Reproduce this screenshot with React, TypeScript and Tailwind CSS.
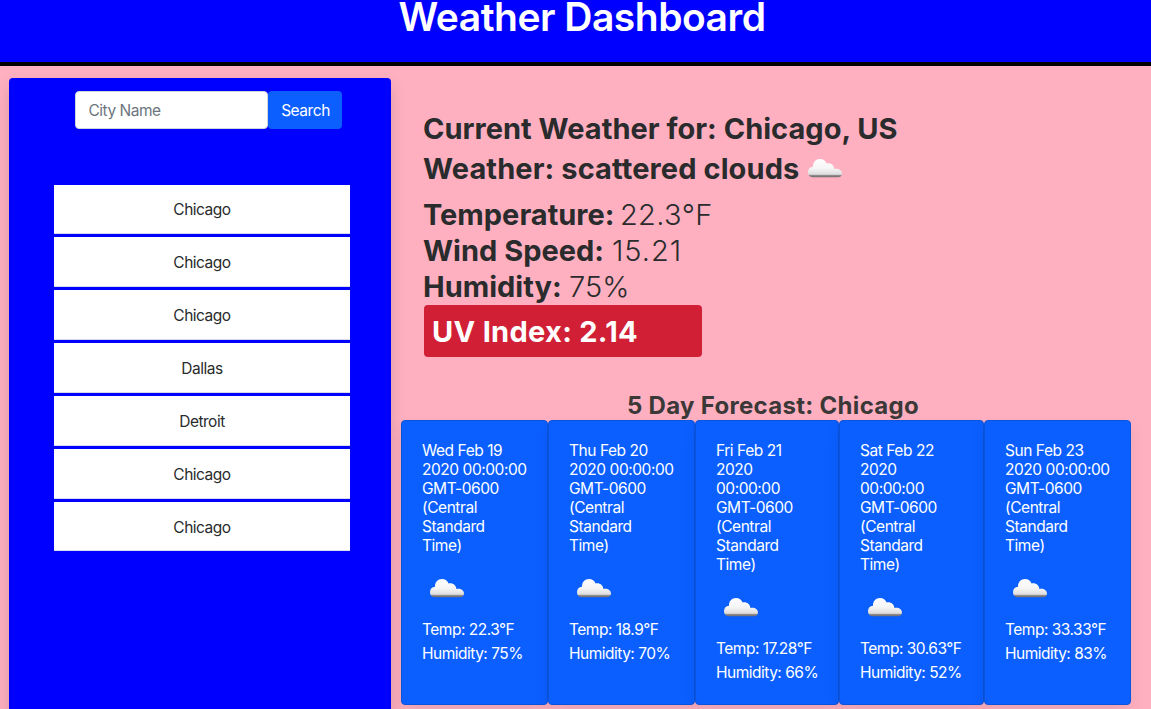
import { useId } from "react";

const cities = ["Chicago", "Chicago", "Chicago", "Dallas", "Detroit", "Chicago", "Chicago"];

const zone = ["GMT-0600", "(Central", "Standard", "Time)"];

const days = [
  { width: "w-[147px]", date: ["Wed Feb 19", "2020 00:00:00", ...zone], icon: "ml-[7px]", temp: "22.3", humidity: "75" },
  { width: "w-[147px]", date: ["Thu Feb 20", "2020 00:00:00", ...zone], icon: "ml-[7px]", temp: "18.9", humidity: "70" },
  { width: "w-[144px]", date: ["Fri Feb 21", "2020", "00:00:00", ...zone], icon: "ml-[7px]", temp: "17.28", humidity: "66" },
  { width: "w-[145px]", date: ["Sat Feb 22", "2020", "00:00:00", ...zone], icon: "ml-[7px]", temp: "30.63", humidity: "52" },
  { width: "w-[147px]", date: ["Sun Feb 23", "2020 00:00:00", ...zone], icon: "ml-[7px]", temp: "33.33", humidity: "83" },
];

function Cloud({ className }: { className: string }) {
  const id = useId();
  return (
    <svg width="36" height="20" viewBox="0 0 36 20" className={className}>
      <defs>
        <linearGradient id={id} x1="0" y1="0" x2="0" y2="1">
          <stop offset="0" stopColor="#fdfdfd" />
          <stop offset="0.5" stopColor="#f6f6f6" />
          <stop offset="0.84" stopColor="#dedee0" />
          <stop offset="0.91" stopColor="#8b8789" />
          <stop offset="1" stopColor="#6f6a6c" />
        </linearGradient>
      </defs>
      <path
        d="M5.5 19.2C2.6 19.2 1 17.2 1 14C1 11 3 9 6 8.8C5.8 4.3 8.8 1 13 1C16.2 1 18.7 2.8 19.6 5.6C23.2 4.6 26.9 6.8 27.4 10.9C31 9.9 35 11.9 35 15.4C35 17.7 33.5 19.2 31 19.2Z"
        fill={`url(#${id})`}
      />
    </svg>
  );
}

export default function App() {
  return (
    <div className="flex h-[709px] w-[1151px] flex-col overflow-hidden bg-[#ffb0c0] font-['Inter',sans-serif] text-[15.5px] text-[#292b2c]">
      <header className="flex h-[66px] shrink-0 justify-center border-b-4 border-black bg-[#0000ff] pl-[13px]">
        <h1 className="h-[34px] whitespace-nowrap text-[39px] leading-[34px] font-[560] tracking-[-0.5px] text-white">Weather Dashboard</h1>
      </header>
      <div className="flex min-h-0 flex-1">
        <aside className="mt-3 ml-[9px] flex h-[660px] w-[382px] shrink-0 flex-col rounded-[4px] bg-[#0000ff] pt-[13px] shadow-[0_8px_16px_rgba(0,0,0,0.15)]">
          <form className="ml-[66px] flex h-[38px]" onSubmit={(e) => e.preventDefault()}>
            <input
              placeholder="City Name"
              aria-label="City Name"
              className="h-[38px] w-[193px] rounded-[4px] border border-[#ced4da] bg-white px-[12.5px] pt-px tracking-[-0.5px] outline-none placeholder:text-[#6c757d]"
            />
            <button className="h-[38px] w-[74px] rounded-[4px] bg-[#0b5fff] pt-[2px] pl-px tracking-[-0.45px] text-white">Search</button>
          </form>
          <ul className="mt-14 ml-[45px] flex w-[296px] flex-col gap-[3px]">
            {cities.map((city, i) => (
              <li key={i} className="flex h-[50px] items-center justify-center border-b border-[#d8d8ee] bg-white pt-[2px] tracking-[-0.5px] first:h-[49px] last:h-[49px] last:pt-[3px]">
                {city}
              </li>
            ))}
          </ul>
        </aside>
        <main className="ml-[10px] flex w-[730px] flex-col">
          <section className="ml-[22px] flex h-[291px] flex-col pt-[43px] text-[29px] whitespace-nowrap">
            <h2 className="h-10 leading-10 font-bold tracking-[0.02px]">Current Weather for: Chicago, US</h2>
            <h2 className="flex h-10 leading-10 font-bold tracking-[0.1px]">
              <span>Weather: scattered clouds</span>
              <Cloud className="mt-[9px] ml-2" />
            </h2>
            <div className="mt-2 leading-9 font-light tracking-[0.4px]">
              <p><strong className="font-bold tracking-normal">Temperature:</strong><span className="ml-[5.5px]">22.3°F</span></p>
              <p><strong className="font-bold tracking-normal">Wind Speed:</strong><span className="ml-[8px] tracking-[1px]">15.21</span></p>
              <p><strong className="font-bold tracking-normal">Humidity:</strong><span className="ml-[7.5px] tracking-[0px]">75%</span></p>
            </div>
            <div className="ml-px h-[52px] w-[278px] rounded-[4px] bg-[#d11f36] pl-2 leading-[53px] font-bold tracking-[0.3px] text-white">
              UV Index: 2.14
            </div>
          </section>
          <h3 className="mt-[34px] h-[29px] pl-[14px] text-center text-[24px] leading-[29px] font-bold tracking-[0.3px] text-[#3b3838]">
            5 Day Forecast: Chicago
          </h3>
          <section className="flex h-[285px]">
            {days.map((day) => (
              <article
                key={day.date[0]}
                className={`${day.width} flex shrink-0 flex-col rounded-[4px] border border-[#0a53dc] bg-[#0b5fff] pt-5 pl-5 tracking-[-0.45px] whitespace-nowrap text-white shadow-[0_8px_16px_rgba(0,0,0,0.08)]`}
              >
                <div className="leading-[19px]">
                  {day.date.map((line) => (
                    <p key={line}>{line}</p>
                  ))}
                </div>
                <Cloud className={`${day.icon} mt-[23px]`} />
                <div className="mt-5 leading-6 tracking-[-0.5px]">
                  <p>Temp: {day.temp}°F</p>
                  <p>Humidity: {day.humidity}%</p>
                </div>
              </article>
            ))}
          </section>
        </main>
      </div>
    </div>
  );
}
